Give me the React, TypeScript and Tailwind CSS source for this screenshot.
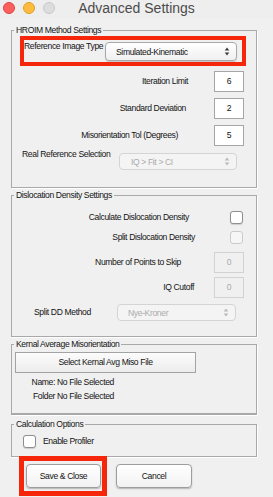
import React from 'react';

function Arrows({ disabled }: { disabled?: boolean }) {
  const c = disabled ? '#b9b9b9' : '#3c3c3c';
  return (
    <svg width="6" height="9" viewBox="0 0 6 9" className="shrink-0">
      <path d="M3 0.5 L5.3 3.6 L0.7 3.6 Z" fill={c} />
      <path d="M3 8.5 L5.3 5.4 L0.7 5.4 Z" fill={c} />
    </svg>
  );
}

function Select({ value, disabled, className }: { value: string; disabled?: boolean; className?: string }) {
  return (
    <div
      className={`flex items-center justify-between rounded-[4px] border pr-[6px] ${
        disabled
          ? 'border-[#d4d4d4] bg-[#f4f4f4] text-[#ababab]'
          : 'border-[#a8a8a8] bg-linear-to-b from-white to-[#f0f0f0] text-[#141414] shadow-[0_1px_1px_rgba(0,0,0,0.18)]'
      } ${className}`}
    >
      <span className="leading-[10px]">{value}</span>
      <Arrows disabled={disabled} />
    </div>
  );
}

function Field({ value, disabled }: { value: string; disabled?: boolean }) {
  return (
    <div
      className={`flex h-[21px] w-[30px] items-center justify-center border ${
        disabled ? 'border-[#d2d2d2] bg-[#f0f0f0] text-[#a9a9a9]' : 'border-[#a6a6a6] bg-white text-[#141414]'
      }`}
    >
      {value}
    </div>
  );
}

function FieldRow({
  label,
  value,
  labelClass,
  disabled,
  className,
}: {
  label: string;
  value: string;
  labelClass: string;
  disabled?: boolean;
  className: string;
}) {
  return (
    <div className={`mr-[12px] flex h-[21px] items-center justify-end ${className}`}>
      <span className={labelClass}>{label}</span>
      <Field value={value} disabled={disabled} />
    </div>
  );
}

function Check({ disabled }: { disabled?: boolean }) {
  return (
    <div
      className={`h-[13px] w-[13px] rounded-[3px] border ${
        disabled
          ? 'border-[#cbcbcb] bg-[#f6f6f6]'
          : 'border-[#8f8f8f] bg-white shadow-[0_0.5px_1px_rgba(0,0,0,0.15)]'
      }`}
    />
  );
}

export default function App() {
  return (
    <div className="h-[497px] w-[273px] overflow-hidden bg-[#f0f0f0] font-['Liberation_Sans',Arial,sans-serif] text-[8.6px] tracking-[-0.38px] text-[#141414]">
      {/* Title bar */}
      <div className="grid h-[19px] grid-cols-[1fr_auto_1fr] items-start bg-[#eeeeee]">
        <div className="ml-[3px] mt-[2px] flex gap-[8px]">
          <div className="h-[12px] w-[12px] rounded-full border border-[#e0443e] bg-[#fc605c]" />
          <div className="h-[12px] w-[12px] rounded-full border border-[#dfa123] bg-[#fdbc40]" />
          <div className="h-[12px] w-[12px] rounded-full border border-[#c8c8c8] bg-[#dddddd]" />
        </div>
        <div className="text-[14px] leading-[16px] tracking-normal text-[#4b4b4b]">Advanced Settings</div>
        <div />
      </div>

      {/* HROIM Method Settings */}
      <fieldset className="ml-[11px] mt-[6px] w-[246px] border border-[#a9a9a9] pb-[17px] shadow-[1px_1px_0_#fff]">
        <legend className="ml-[2px] px-[2px] leading-[10px]">HROIM Method Settings</legend>
        <div className="ml-[8px] mt-[1px] flex h-[30px] w-[226px] items-start border-4 border-[#f5260a]">
          <span className="w-[81px] pt-[1px] leading-[10px]">Reference Image Type</span>
          <Select value="Simulated-Kinematic" className="mt-[2px] h-[19px] w-[132px] pl-[10px]" />
        </div>
        <FieldRow className="mt-[5px]" label="Iteration Limit" value="6" labelClass="mr-[26px]" />
        <FieldRow className="mt-[6px]" label="Standard Deviation" value="2" labelClass="mr-[28px]" />
        <FieldRow className="mt-[6px]" label="Misorientation Tol (Degrees)" value="5" labelClass="mr-[36px]" />
        <div className="mt-[3px] flex items-start">
          <span className="ml-[10px] w-[97px] leading-[10px]">Real Reference Selection</span>
          <Select disabled value="IQ > Fit > CI" className="mt-[4px] h-[17px] w-[118px] pl-[11px]" />
        </div>
      </fieldset>

      {/* Dislocation Density Settings */}
      <fieldset className="ml-[11px] mt-[2px] w-[246px] border border-[#a9a9a9] pb-[15px] shadow-[1px_1px_0_#fff]">
        <legend className="ml-[2px] px-[2px] leading-[10px]">Dislocation Density Settings</legend>
        <div className="mr-[13px] mt-[11px] flex h-[13px] items-center justify-end">
          <span className="mr-[41px]">Calculate Dislocation Density</span>
          <Check />
        </div>
        <div className="mr-[13px] mt-[7px] flex h-[13px] items-center justify-end">
          <span className="mr-[35px]">Split Dislocation Density</span>
          <Check disabled />
        </div>
        <FieldRow className="mt-[8px]" label="Number of Points to Skip" value="0" labelClass="mr-[33px]" disabled />
        <FieldRow className="mt-[4px]" label="IQ Cutoff" value="0" labelClass="mr-[20px]" disabled />
        <div className="mt-[6px] flex h-[17px] items-center">
          <span className="ml-[22px] w-[83px]">Split DD Method</span>
          <Select disabled value="Nye-Kroner" className="h-[17px] w-[119px] pl-[10px]" />
        </div>
      </fieldset>

      {/* Kernal Average Misorientation */}
      <fieldset className="ml-[11px] mt-[2px] w-[246px] border border-b-2 border-[#a9a9a9] pb-[12px] shadow-[1px_1px_0_#fff]">
        <legend className="ml-[2px] px-[2px] leading-[10px]">Kernal Average Misorientation</legend>
        <div className="ml-[3px] mt-[3px] flex h-[21px] w-[181px] items-center justify-center border border-[#a3a3a3] bg-linear-to-b from-[#fcfcfc] to-[#ececec]">
          Select Kernal Avg Miso File
        </div>
        <div className="mt-[4px] w-[102px] text-right leading-[10px]">Name: No File Selected</div>
        <div className="mt-[4px] w-[102px] text-right leading-[10px]">Folder No File Selected</div>
      </fieldset>

      {/* Calculation Options */}
      <fieldset className="ml-[11px] mt-[4px] w-[246px] border border-[#a9a9a9] pb-[8px] shadow-[1px_1px_0_#fff]">
        <legend className="ml-[2px] px-[2px] leading-[10px]">Calculation Options</legend>
        <div className="ml-[11px] mt-[6px] flex h-[13px] items-center gap-[7px]">
          <Check />
          <span>Enable Profiler</span>
        </div>
      </fieldset>

      {/* Buttons */}
      <div className="-mt-[1px] ml-[19px] flex items-start">
        <div className="h-[40px] w-[88px] border-[5px] border-[#f5260a]">
          <div className="ml-[2px] mt-[3px] flex h-[24px] w-[75px] items-center justify-center rounded-[4px] border border-[#9d9d9d] bg-linear-to-b from-white to-[#f2f2f2] shadow-[0_1px_1.5px_rgba(0,0,0,0.25)]">
            Save &amp; Close
          </div>
        </div>
        <div className="ml-[9px] mt-[8px] flex h-[24px] w-[76px] items-center justify-center rounded-[4px] border border-[#9d9d9d] bg-linear-to-b from-white to-[#f2f2f2] shadow-[0_1px_1.5px_rgba(0,0,0,0.25)]">
          Cancel
        </div>
      </div>
    </div>
  );
}
